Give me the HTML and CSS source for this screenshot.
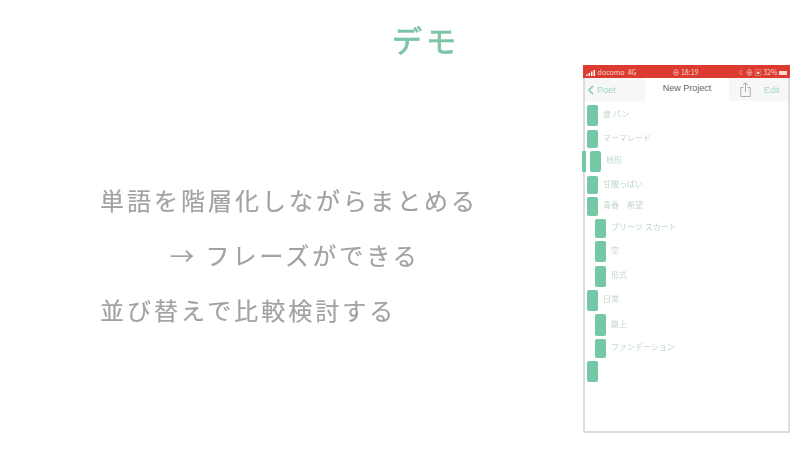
FILE: index.html
```html
<!DOCTYPE html>
<html lang="ja">

<head>
    <meta charset="UTF-8">
    <title>デモ</title>
    <link rel="stylesheet" href="styles.css">
</head>

<body>
    <h1 class="title">デモ</h1>
    <div class="main">
        <div class="points">
            <p>単語を階層化しながらまとめる</p>
            <p class="indent">→ フレーズができる</p>
            <p>並び替えで比較検討する</p>
        </div>
        <div class="phone">
            <div class="status">
                <span class="status-left">
                    <svg width="10" height="6" viewBox="0 0 10 6"><path d="M0 6V4.5h1.5V6zM2.5 6V3H4v3zM5 6V1.5h1.5V6zM7.5 6V0H9v6z" fill="#fff"/></svg>
                    docomo&nbsp; 4G
                </span>
                <span class="status-mid">⊕ 18:19</span>
                <span class="status-right">☾ ⊕ ▣ 32% <i class="battery"></i></span>
            </div>
            <div class="nav">
                <span class="back">
                    <svg width="6" height="10" viewBox="0 0 6 10"><path d="M5 1L1 5l4 4" fill="none" stroke="#86cdb0" stroke-width="1.6"/></svg>
                    Poet
                </span>
                <span class="nav-title">New Project</span>
                <svg class="share" width="11" height="15" viewBox="0 0 11 15"><path d="M3.5 5.5H.8v9h9.4v-9H7.5M5.5 10V1M3 3.2L5.5 .8 8 3.2" fill="none" stroke="#a9b0ac" stroke-width="1"/></svg>
                <span class="edit">Edit</span>
            </div>
            <ul class="list">
                <li class="row h21 gap"><b></b><span>食 パン</span></li>
                <li class="row h18"><b></b><span>マーマレード</span></li>
                <li class="row h21 gap drag"><b></b><span>地形</span></li>
                <li class="row h18"><b></b><span>甘酸っぱい</span></li>
                <li class="row h19"><b></b><span>青春　希望</span></li>
                <li class="row h19 sub"><b></b><span>プリーツ スカート</span></li>
                <li class="row h21 sub gap"><b></b><span>空</span></li>
                <li class="row h21 sub"><b></b><span>形式</span></li>
                <li class="row h21"><b></b><span>日常</span></li>
                <li class="row h22 sub"><b></b><span>路上</span></li>
                <li class="row h19 sub"><b></b><span>ファンデーション</span></li>
                <li class="row h21"><b></b></li>
            </ul>
        </div>
    </div>
</body>

</html>
```

FILE: styles.css
```css
body {
    margin: 0;
    width: 800px;
    height: 450px;
    overflow: hidden;
    background: #fff;
    font-family: "Noto Sans CJK JP", "Noto Sans", sans-serif;
}

.title {
    margin: 0;
    height: 50px;
    padding: 14px 0 0 392px;
    margin-bottom: 1px;
    font-size: 30px;
    font-weight: 400;
    line-height: 50px;
    letter-spacing: 4px;
    color: #7cc4a6;
    -webkit-text-stroke: 0.7px #7cc4a6;
    filter: blur(0.4px);
}

.main {
    display: flex;
    padding-left: 100px;
}

.points {
    width: 483px;
    padding-top: 107px;
    font-size: 24px;
    letter-spacing: 3px;
    color: #a0a3a4;
    -webkit-text-stroke: 0.2px #a0a3a4;
    filter: blur(0.4px);
}

.points p {
    margin: 0;
    height: 55px;
    line-height: 55px;
    white-space: nowrap;
}

.indent {
    padding-left: 70px;
}

/* phone capture */
.phone {
    display: flex;
    flex-direction: column;
    width: 207px;
    height: 368px;
    filter: blur(0.5px);
    font-size: 8px;
}

.status {
    display: flex;
    justify-content: space-between;
    align-items: center;
    height: 13px;
    padding: 0 3px;
    background: #dc3b2f;
    color: #f8d5d1;
    font-size: 7px;
    white-space: nowrap;
}

.status-left svg {
    vertical-align: -1px;
}

.status-mid {
    margin-left: -4px;
}

.battery {
    display: inline-block;
    width: 8px;
    height: 4px;
    background: #f6d9d6;
}

.nav {
    display: flex;
    align-items: center;
    height: 23px;
    padding: 0 3px;
    border: solid #dcdcdc;
    border-width: 0 2px;
    background: #f6f7f6;
    font-family: "Liberation Sans", sans-serif;
    font-size: 9px;
    color: #a5dac5;
}

.back {
    display: flex;
    align-items: center;
    gap: 3px;
    width: 57px;
}

.nav-title {
    width: 84px;
    height: 21px;
    line-height: 21px;
    padding-bottom: 2px;
    text-align: center;
    background: #fff;
    color: #666;
}

.share {
    margin-left: 11px;
}

.edit {
    margin-left: 13px;
}

.list {
    flex: 1;
    list-style: none;
    margin: 0;
    padding: 4px 0 0 2px;
    border: solid #dcdcdc;
    border-width: 0 2px 2px;
    border-radius: 0 0 2px 2px;
}

.row {
    display: flex;
    align-items: center;
    gap: 5px;
    margin-bottom: 3px;
    color: #c0d6cb;
    line-height: 1;
    white-space: nowrap;
}

.row span {
    margin-bottom: 3px;
}

.row b {
    flex: none;
    align-self: stretch;
    width: 11px;
    border-radius: 2px;
    background: #74c8a6;
}

.h18 { height: 18px; }
.h19 { height: 19px; }
.h21 { height: 21px; }
.h22 { height: 22px; }
.gap { margin-bottom: 4px; }

.sub {
    padding-left: 8px;
}

.drag {
    padding-left: 3px;
    position: relative;
}

/* bar marking the row being dragged */
.drag::before {
    content: "";
    position: absolute;
    left: -5px;
    top: 0;
    width: 4px;
    height: 21px;
    background: #74c8a6;
}
```
